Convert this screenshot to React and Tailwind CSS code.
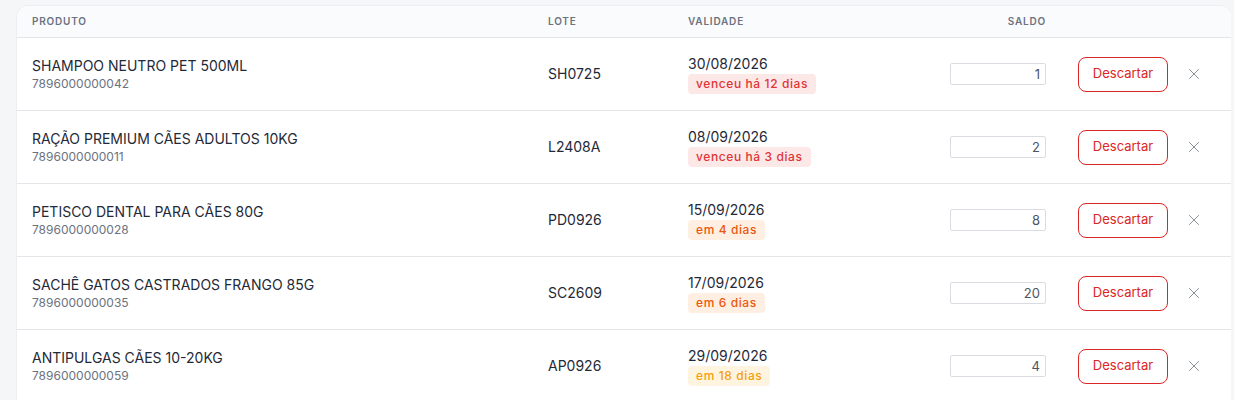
import React from 'react';

const items = [
  { name: 'SHAMPOO NEUTRO PET 500ML', ean: '7896000000042', lote: 'SH0725', date: '30/08/2026', badge: 'venceu há 12 dias', tone: 'red', saldo: 1 },
  { name: 'RAÇÃO PREMIUM CÃES ADULTOS 10KG', ean: '7896000000011', lote: 'L2408A', date: '08/09/2026', badge: 'venceu há 3 dias', tone: 'red', saldo: 2 },
  { name: 'PETISCO DENTAL PARA CÃES 80G', ean: '7896000000028', lote: 'PD0926', date: '15/09/2026', badge: 'em 4 dias', tone: 'orange', saldo: 8 },
  { name: 'SACHÊ GATOS CASTRADOS FRANGO 85G', ean: '7896000000035', lote: 'SC2609', date: '17/09/2026', badge: 'em 6 dias', tone: 'orange', saldo: 20 },
  { name: 'ANTIPULGAS CÃES 10-20KG', ean: '7896000000059', lote: 'AP0926', date: '29/09/2026', badge: 'em 18 dias', tone: 'amber', saldo: 4 },
];

const tones = {
  red: 'bg-[#fde8e8] text-[#df3535]',
  orange: 'bg-[#ffefe3] text-[#ea580c]',
  amber: 'bg-[#fff4e0] text-[#f59e0b]',
};

const cols = 'grid grid-cols-[516px_140px_262px_96px_1fr] items-center pl-[15px]';

export default function App() {
  return (
    <div className="min-h-screen bg-[#f5f6f8] pt-[5px] pl-4 font-['Inter',sans-serif]">
      <div className="w-[1215px] bg-white rounded-t-xl border-l border-t border-[#eceef1] overflow-hidden">
        {/* Header */}
        <div className={`${cols} h-8 bg-[#fafbfc] border-b border-[#e3e5e9] text-[10px] font-semibold tracking-[0.08em] text-[#6b7280]`}>
          <div>PRODUTO</div>
          <div>LOTE</div>
          <div>VALIDADE</div>
          <div className="text-right">SALDO</div>
          <div />
        </div>

        {items.map((it) => (
          <div key={it.ean} className={`${cols} h-[73px] border-b border-[#e3e5e9]`}>
            <div className="flex flex-col">
              <div className="text-sm leading-5 text-[#1f2937]">{it.name}</div>
              <div className="text-xs leading-4 text-[#6b7280]">{it.ean}</div>
            </div>
            <div className="text-sm text-[#1f2937]">{it.lote}</div>
            <div className="flex flex-col items-start">
              <div className="text-sm leading-5 text-[#1f2937]">{it.date}</div>
              <div className={`px-2 h-5 leading-5 rounded text-xs font-medium tracking-[0.05em] ${tones[it.tone]}`}>
                {it.badge}
              </div>
            </div>
            <div className="flex">
              <input
                type="text"
                defaultValue={it.saldo}
                className="w-[96px] h-[22px] border border-[#d9dce1] rounded-[2px] pl-1 pr-[5px] text-right text-[13px] text-[#4b5563] outline-none"
              />
            </div>
            <div className="flex items-center pl-8">
              <button className="w-[90px] h-[35px] rounded-lg border border-[#dc2626] text-[13px] text-[#dc2626] bg-white">
                Descartar
              </button>
              <button className="ml-5 text-[#8b919a]">
                <svg width="12" height="12" viewBox="0 0 12 12" fill="none" stroke="currentColor" strokeWidth="1" strokeLinecap="round">
                  <path d="M1.5 1.5l9 9M10.5 1.5l-9 9" />
                </svg>
              </button>
            </div>
          </div>
        ))}
      </div>
    </div>
  );
}
